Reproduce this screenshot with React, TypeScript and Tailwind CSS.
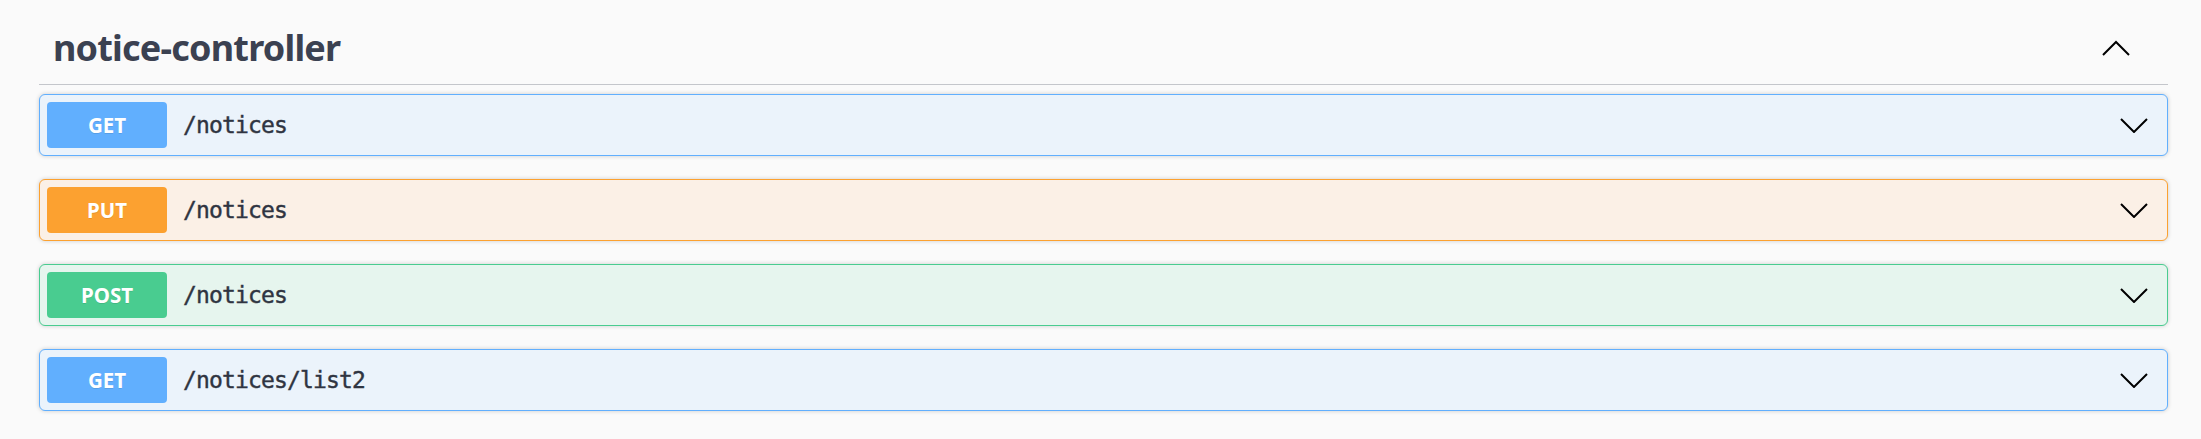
const ops = [
  { method: 'GET', path: '/notices', badge: 'bg-[#61affe]', box: 'border-[#61affe] bg-[#ebf3fb]' },
  { method: 'PUT', path: '/notices', badge: 'bg-[#fca130]', box: 'border-[#fca130] bg-[#fbf0e6]' },
  { method: 'POST', path: '/notices', badge: 'bg-[#49cc90]', box: 'border-[#49cc90] bg-[#e6f5ee]' },
  { method: 'GET', path: '/notices/list2', badge: 'bg-[#61affe]', box: 'border-[#61affe] bg-[#ebf3fb]' },
];

function Chevron({ up }: { up?: boolean }) {
  return (
    <svg width="28" height="16" viewBox="0 0 28 16" fill="none" className="block">
      <polyline
        points={up ? '1,15 14,2 27,15' : '1,2 14,15 27,2'}
        stroke="#000"
        strokeWidth="2"
      />
    </svg>
  );
}

export default function App() {
  return (
    <div className="min-h-[439px] w-full bg-[#fafafa] pt-[16px] pl-[39px] pr-[33px] font-['Noto_Sans',sans-serif]">
      <div className="flex h-[69px] items-center justify-between border-b border-[#c4c6cb] pl-[14px] pr-[38px] pb-[4px]">
        <h3 className="text-[36px] font-bold tracking-[-0.8px] text-[#3b4151]">notice-controller</h3>
        <Chevron up />
      </div>

      <div className="mt-[9px] flex flex-col gap-[23px]">
        {ops.map((op, i) => (
          <div
            key={i}
            className={`flex h-[62px] items-center rounded-[6px] border px-[7px] shadow-[0_0_4px_rgba(0,0,0,0.19)] ${op.box}`}
          >
            <div
              className={`flex h-[46px] w-[120px] items-center justify-center rounded-[4px] text-[20.5px] font-bold text-white [text-shadow:0_1px_0_rgba(0,0,0,0.1)] ${op.badge}`}
            >
              {op.method}
            </div>
            <span className="flex-1 pl-[16px] font-['DejaVu_Sans_Mono',monospace] text-[23px] tracking-[-0.85px] text-[#2f3441] [-webkit-text-stroke:0.4px_#2f3441]">
              {op.path}
            </span>
            <div className="pr-[12px]">
              <Chevron />
            </div>
          </div>
        ))}
      </div>
    </div>
  );
}
